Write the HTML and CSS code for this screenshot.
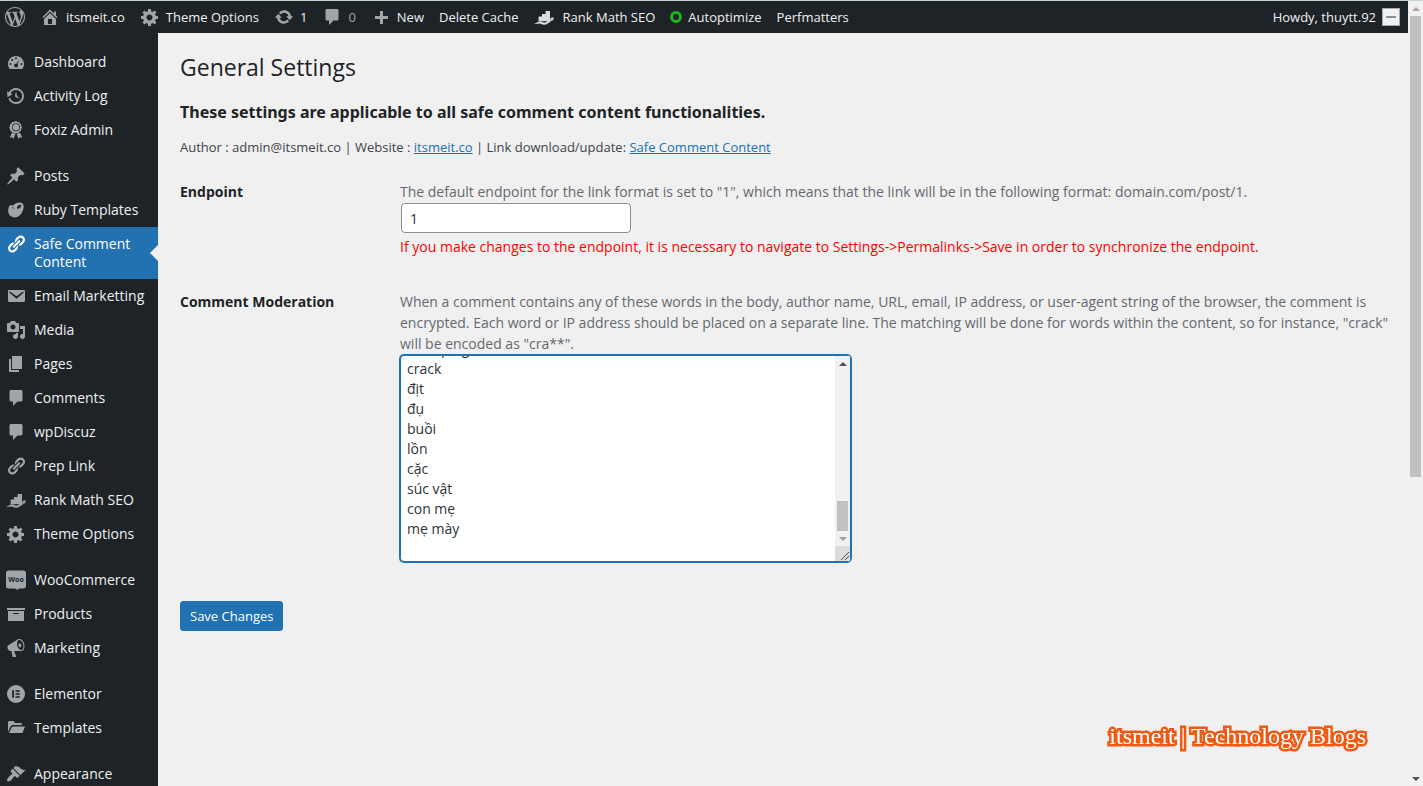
FILE: index.html
```html
<!DOCTYPE html>
<html lang="en">
<head>
<meta charset="utf-8">
<title>General Settings</title>
<link rel="stylesheet" href="styles.css">
</head>
<body>
<svg class="sprite" aria-hidden="true">
  <symbol id="i-wp" viewBox="0 0 20 20"><path d="M20 10c0-5.51-4.49-10-10-10C4.48 0 0 4.49 0 10c0 5.52 4.48 10 10 10 5.51 0 10-4.48 10-10zM7.78 15.37L4.37 6.22c.55-.02 1.17-.08 1.17-.08.5-.06.44-1.13-.06-1.11 0 0-1.45.11-2.37.11-.18 0-.37 0-.58-.01C4.12 2.69 6.87 1.11 10 1.11c2.33 0 4.45.87 6.05 2.34-.68-.11-1.65.39-1.65 1.58 0 .74.45 1.36.9 2.1.35.61.55 1.36.55 2.46 0 1.49-1.4 5-1.4 5l-3.03-8.37c.54-.02.82-.17.82-.17.5-.05.44-1.25-.06-1.22 0 0-1.44.12-2.38.12-.87 0-2.33-.12-2.33-.12-.5-.03-.56 1.2-.06 1.22l.92.08 1.26 3.41zM17.41 10c.24-.64.74-1.87.43-4.25.7 1.29 1.05 2.71 1.05 4.25 0 3.29-1.73 6.24-4.4 7.78.97-2.59 1.94-5.2 2.92-7.78zM6.1 18.09C3.12 16.65 1.11 13.53 1.11 10c0-1.3.23-2.48.72-3.59C3.25 10.3 4.67 14.2 6.1 18.09zm4.03-6.63l2.58 6.98c-.86.29-1.76.45-2.71.45-.79 0-1.57-.11-2.29-.33.81-2.38 1.62-4.74 2.42-7.1z"/></symbol>
  <symbol id="i-home" viewBox="0 0 20 20"><path d="M16 8.5l1.53 1.53-1.06 1.06L10 4.6l-6.47 6.49-1.06-1.06L10 2.5l4 4v-2h2v4zm-6-2.46l6 5.99V18H4v-5.97zM12 17v-5H8v5h4z"/></symbol>
  <symbol id="i-gear" viewBox="0 0 20 20"><path d="M18 12h-2.18c-.17.7-.44 1.35-.81 1.93l1.54 1.54-2.1 2.1-1.54-1.54c-.58.36-1.23.63-1.91.79V19H8v-2.18c-.68-.16-1.33-.43-1.91-.79l-1.54 1.54-2.12-2.12 1.54-1.54c-.36-.58-.63-1.23-.79-1.91H1V9.03h2.17c.16-.7.44-1.35.8-1.94L2.43 5.55l2.1-2.1 1.54 1.54c.58-.37 1.24-.64 1.93-.81V2h3v2.18c.68.16 1.33.43 1.91.79l1.54-1.54 2.12 2.12-1.54 1.54c.36.59.64 1.24.8 1.94H18V12zm-8.5 1.5c1.66 0 3-1.34 3-3s-1.34-3-3-3-3 1.34-3 3 1.34 3 3 3z"/></symbol>
  <symbol id="i-update" viewBox="0 0 20 20"><path d="M10.2 3.28c3.53 0 6.43 2.61 6.92 6h2.08l-3.5 4-3.5-4h2.32c-.45-1.97-2.21-3.45-4.32-3.45-1.45 0-2.73.71-3.54 1.78L4.95 5.66C6.23 4.2 8.11 3.28 10.2 3.28zm-.4 13.44c-3.52 0-6.43-2.61-6.92-6H.8l3.5-4c1.17 1.33 2.33 2.67 3.5 4H5.48c.45 1.97 2.21 3.45 4.32 3.45 1.45 0 2.73-.71 3.54-1.78l1.71 1.95c-1.28 1.46-3.15 2.38-5.25 2.38z"/></symbol>
  <symbol id="i-comment" viewBox="0 0 20 20"><path d="M5 2h10c.8 0 1.500.7 1.500 1.500v8.500c0 .8-.7 1.500-1.500 1.500h-3.500L7 18v-4.500H5c-.8 0-1.500-.7-1.500-1.500V3.500C3.500 2.700 4.200 2 5 2z"/></symbol>
  <symbol id="i-plus" viewBox="0 0 20 20"><path d="M17 9v3h-5v5H9v-5H4V9h5V4h3v5h5z"/></symbol>
  <symbol id="i-rank" viewBox="0 0 20 20"><path d="M4.600 9.500h3.400v4.300l-3.400.9zM8 7h3.600v7.200H8zM11.600 4H16v9l-2.200 2-2.200-.9z"/><path d="M.2 16.200c2.500-.1 4.500-2.300 7-1.700 1.600.4 2 1.400 3.500 1.100 2-.4 4-1.600 6.300-3.600l-.9-.9 3.700-.8-.8 3.500-.9-.8c-2.300 2.300-4.600 4.400-7.800 4.700-2.200.2-3-1.300-4.800-1.300-1.800.1-3.400.8-5.300-.2z"/></symbol>
  <symbol id="i-dash" viewBox="0 0 20 20"><path fill-rule="evenodd" d="M3.760 17h12.480c1.100-1.370 1.760-3.110 1.760-5 0-4.420-3.580-8-8-8s-8 3.580-8 8c0 1.890.66 3.630 1.760 5zM9 6.200a1 1 0 1 1 2 0 1 1 0 1 1-2 0zM5.200 8a1 1 0 1 1 2 0 1 1 0 1 1-2 0zM3.500 12a1 1 0 1 1 2 0 1 1 0 1 1-2 0zM14.500 12a1 1 0 1 1 2 0 1 1 0 1 1-2 0zM13.800 7l-2.300 5.100c.7.700.8 1.900.1 2.700-.8.900-2.200.9-3 0-.8-.9-.6-2.200.2-2.800.5-.3 1-.4 1.500-.3z"/></symbol>
  <symbol id="i-backup" viewBox="0 0 20 20"><path d="M13.650 2.880c3.930 2.010 5.480 6.840 3.470 10.770s-6.830 5.480-10.770 3.470c-1.870-.96-3.200-2.560-3.860-4.400l1.640-1.030c.45 1.570 1.520 2.950 3.080 3.760 3.010 1.540 6.690.35 8.230-2.660 1.550-3.010.36-6.690-2.650-8.240C9.780 3.010 6.100 4.200 4.560 7.210l1.880.97-4.950 3.080-.39-5.820 1.780.91C4.900 2.400 9.750.89 13.650 2.880zm-4.360 7.830C9.110 10.530 9 10.280 9 10c0-.07.03-.12.040-.19h-.01L10 5l.97 4.810L14 13l-4.500-2.120.020-.020c-.08-.04-.16-.09-.23-.15z"/></symbol>
  <symbol id="i-award" viewBox="0 0 20 20"><path fill-rule="evenodd" d="M10 1l1.500.9 1.700.1.700 1.500 1.400 1 0 1.700.8 1.500-.9 1.400-.1 1.700-1.600.7-1 1.400-1.700-.1-1.200.6-1.300-.6-1.700.1-1-1.400-1.400-.7-.2-1.700-.8-1.400.7-1.500.1-1.700 1.400-1 .7-1.500 1.700-.1zM10 3.300a4 4 0 1 0 0 8 4 4 0 0 0 0-8z"/><circle cx="10" cy="7.300" r="3.200"/><path d="M6 12.800l2 .6 1.500 0L7.500 19l-1.700-1.900L3.500 18zM14 12.800l-2 .6-1.500 0 2 5.600 1.700-1.900 2.300.9z"/></symbol>
  <symbol id="i-pin" viewBox="0 0 20 20"><path d="M10.440 3.020l1.820-1.820 6.360 6.350-1.830 1.820c-1.050-.68-2.480-.57-3.410.36l-.75.75c-.92.93-1.040 2.350-.35 3.410l-1.830 1.820-2.410-2.410-2.800 2.790c-.42.42-3.380 2.710-3.800 2.290s1.860-3.390 2.280-3.810l2.790-2.790L4.100 9.360l1.830-1.820c1.050.69 2.480.57 3.400-.36l.75-.75c.93-.92 1.050-2.350.36-3.410z"/></symbol>
  <symbol id="i-ruby" viewBox="0 0 20 20"><path fill-rule="evenodd" d="M3.200 6.200C4 4.900 5.600 4.700 6.700 5.800 8.300 3.600 11.300 2.300 14 2.600c3 .3 4.200 2.400 3.600 5.400-.9 5-4.300 9.400-8.900 9.400-3.800 0-6.700-2.700-6.500-6.800.1-1.800.3-3.300 1-4.400zM6.300 6.500c.9.500 1.500 1.300 1.300 2.400-.7-.3-1.200-1.100-1.300-2.400zM11 7.200c.7-1.500 2.300-2.600 4.200-2.300-.1 1.900-1.300 3.300-2.800 3.800-1.100.3-1.800-.5-1.400-1.500z"/></symbol>
  <symbol id="i-link" viewBox="0 0 20 20"><path d="M17.740 2.760c1.680 1.690 1.680 4.410 0 6.100l-1.530 1.520c-1.120 1.120-2.700 1.470-4.140 1.090l2.620-2.610.76-.77.76-.76c.84-.84.84-2.200 0-3.040-.84-.85-2.200-.85-3.040 0l-.77.76-3.380 3.380c-.37-1.440-.02-3.020 1.100-4.140l1.520-1.530c1.690-1.680 4.420-1.680 6.100 0zM8.590 13.430l5.340-5.340c.42-.42.42-1.100 0-1.520-.44-.43-1.130-.39-1.530 0l-5.330 5.340c-.42.42-.42 1.100 0 1.520.44.43 1.130.39 1.520 0zm-.76 2.290l4.140-4.150c.38 1.440.03 3.020-1.090 4.140l-1.520 1.530c-1.690 1.680-4.410 1.680-6.100 0-1.680-1.680-1.680-4.420 0-6.100l1.530-1.520c1.120-1.120 2.700-1.470 4.140-1.100l-4.140 4.150c-.85.84-.85 2.200 0 3.050.84.84 2.200.84 3.040 0z"/></symbol>
  <symbol id="i-mail" viewBox="0 0 20 20"><path fill-rule="evenodd" d="M3.200 4h14.600c.7 0 1.200.5 1.200 1.200v9.600c0 .7-.5 1.200-1.200 1.200H3.200C2.500 16 2 15.500 2 14.800V5.200C2 4.500 2.500 4 3.200 4zM4 5.400l-.8 1.200 7.300 6.200 7.300-6.200-.8-1.200-6.500 4.900z"/></symbol>
  <symbol id="i-media" viewBox="0 0 20 20"><path d="M13 11V4c0-.55-.45-1-1-1h-1.670L9 1H5L3.670 3H2c-.55 0-1 .45-1 1v7c0 .55.45 1 1 1h10c.55 0 1-.45 1-1zM7 4.500c1.380 0 2.500 1.120 2.500 2.500S8.380 9.500 7 9.500 4.500 8.380 4.500 7 5.620 4.500 7 4.500zM14 6h5v10.500c0 1.380-1.120 2.500-2.500 2.500S14 17.880 14 16.500s1.120-2.500 2.500-2.500c.17 0 .34.020.5.050V9h-3V6zm-4 8.050V13h2v3.500c0 1.380-1.120 2.500-2.500 2.500S7 17.880 7 16.500 8.120 14 9.500 14c.17 0 .34.020.5.050z"/></symbol>
  <symbol id="i-page" viewBox="0 0 20 20"><path d="M6 15V2h10v13H6zm-1 1h8v2H3V5h2v11z"/></symbol>
  <symbol id="i-woo" viewBox="0 0 20 20"><path d="M2.500 .5h15C18.900 .5 20 1.600 20 3v13c0 1.400-1.100 2.500-2.500 2.500H13l-1.300 1.500L9 18.500H2.500A2.500 2.500 0 0 1 0 16V3C0 1.600 1.100.5 2.500.5z"/><text class="woo-mark" x="10" y="12" text-anchor="middle">Woo</text></symbol>
  <symbol id="i-archive" viewBox="0 0 20 20"><path d="M19 4v2H1V4h18zM2 7h16v10H2V7zm11 3V9H7v1h6z"/></symbol>
  <symbol id="i-mega" viewBox="0 0 20 20"><path fill-rule="evenodd" d="M18.150 5.940c.46 1.620.38 3.220-.02 4.480-.42 1.280-1.260 2.180-2.300 2.480-.3.080-.6.100-1 .1h-6.800l2.220 5.500c.02.14-.06.26-.14.34-.08.1-.24.16-.34.16H6.950c-.1 0-.26-.06-.34-.16-.08-.08-.16-.2-.14-.34l-1-5.500H4.250c-.5.040-1.100-.2-1.560-.64s-.88-1.080-1.060-1.880c-.24-.8-.2-1.560-.02-2.200.18-.62.58-1.080 1.060-1.300l9.020-5.420c.3-.2.600-.36.980-.46 1.040-.3 2.240.1 3.220.98s1.840 2.240 2.260 3.860zM15.570 11.920c.4-.1.740-.34 1.020-.7.580-.7.860-1.760.86-3.040 0-.64-.1-1.300-.28-1.980-.34-1.360-1.020-2.500-1.780-3.240s-1.680-1.100-2.460-.88c-.82.22-1.400.96-1.700 2-.32 1.040-.28 2.360.06 3.720.38 1.360 1 2.500 1.800 3.240.78.74 1.620 1.100 2.480.88z"/><ellipse cx="13.900" cy="7.300" rx="1.300" ry="2.100" transform="rotate(-15 13.900 7.300)"/></symbol>
  <symbol id="i-elementor" viewBox="0 0 20 20"><path fill-rule="evenodd" d="M10 1a9 9 0 1 0 0 18 9 9 0 0 0 0-18zM6.200 6.200H8v7.600H6.200zM9.500 6.200h4.300v1.600H9.500zM9.500 9.200h4.300v1.600H9.500zM9.500 12.200h4.300v1.600H9.500z"/></symbol>
  <symbol id="i-folder" viewBox="0 0 20 20"><path d="M2 14V4.500C2 3.700 2.700 3 3.500 3h4L9 5h5.500c.8 0 1.500.7 1.500 1.500V7H7.500C6 7 5 7.600 4.400 8.800zM7.500 8.500H19L16.500 15H3l2.700-5.500c.3-.6 1-1 1.800-1z"/></symbol>
  <symbol id="i-brush" viewBox="0 0 20 20"><path d="M14.480 11.060L7.410 3.990l1.500-1.500c.5-.56 2.300-.47 3.510.32 1.210.8 1.430 1.280 2.910 2.100 1.180.64 2.450 1.260 4.450.85zm-.71.710L6.700 4.700 4.930 6.470c-.39.39-.39 1.020 0 1.410l1.060 1.060c.39.39.39 1.030 0 1.420-.6.6-1.430 1.110-2.210 1.690-.35.26-.7.53-1.010.84C1.430 14.230.4 16.080 1.400 17.070c.99 1 2.840-.03 4.180-1.360.31-.31.58-.66.85-1.020.57-.78 1.080-1.610 1.690-2.210.39-.39 1.020-.39 1.410 0l1.060 1.060c.39.39 1.020.39 1.410 0z"/></symbol>
</svg>

<div class="window">
  <div class="screen">
    <header class="adminbar">
      <nav class="bar-links" aria-label="Toolbar">
        <a href="#" aria-label="About WordPress"><svg class="icon"><use href="#i-wp"/></svg></a>
        <a href="#"><svg class="icon"><use href="#i-home"/></svg>itsmeit.co</a>
        <a href="#"><svg class="icon"><use href="#i-gear"/></svg>Theme Options</a>
        <a href="#"><svg class="icon"><use href="#i-update"/></svg>1</a>
        <a href="#"><svg class="icon"><use href="#i-comment"/></svg><span class="muted">0</span></a>
        <a href="#"><svg class="icon"><use href="#i-plus"/></svg>New</a>
        <a href="#">Delete Cache</a>
        <a class="wide-gap" href="#"><svg class="icon light"><use href="#i-rank"/></svg>Rank Math SEO</a>
        <a href="#"><span class="ring"></span>Autoptimize</a>
        <a href="#">Perfmatters</a>
      </nav>
      <a class="account" href="#">Howdy, thuytt.92<span class="avatar"><span class="avatar-mark"></span></span></a>
    </header>

    <div class="body">
      <nav class="menu" aria-label="Main menu">
        <a href="#"><svg class="icon"><use href="#i-dash"/></svg>Dashboard</a>
        <a href="#"><svg class="icon"><use href="#i-backup"/></svg>Activity Log</a>
        <a href="#"><svg class="icon"><use href="#i-award"/></svg>Foxiz Admin</a>
        <a class="group" href="#"><svg class="icon"><use href="#i-pin"/></svg>Posts</a>
        <a href="#"><svg class="icon"><use href="#i-ruby"/></svg>Ruby Templates</a>
        <a class="current" href="#" aria-current="page"><svg class="icon"><use href="#i-link"/></svg>Safe Comment Content</a>
        <a href="#"><svg class="icon"><use href="#i-mail"/></svg>Email Marketting</a>
        <a href="#"><svg class="icon"><use href="#i-media"/></svg>Media</a>
        <a href="#"><svg class="icon"><use href="#i-page"/></svg>Pages</a>
        <a href="#"><svg class="icon"><use href="#i-comment"/></svg>Comments</a>
        <a href="#"><svg class="icon"><use href="#i-comment"/></svg>wpDiscuz</a>
        <a href="#"><svg class="icon"><use href="#i-link"/></svg>Prep Link</a>
        <a href="#"><svg class="icon"><use href="#i-rank"/></svg>Rank Math SEO</a>
        <a href="#"><svg class="icon"><use href="#i-gear"/></svg>Theme Options</a>
        <a class="group" href="#"><svg class="icon"><use href="#i-woo"/></svg>WooCommerce</a>
        <a href="#"><svg class="icon"><use href="#i-archive"/></svg>Products</a>
        <a href="#"><svg class="icon"><use href="#i-mega"/></svg>Marketing</a>
        <a class="group" href="#"><svg class="icon"><use href="#i-elementor"/></svg>Elementor</a>
        <a href="#"><svg class="icon"><use href="#i-folder"/></svg>Templates</a>
        <a class="group" href="#"><svg class="icon"><use href="#i-brush"/></svg>Appearance</a>
      </nav>

      <main class="content">
        <h1>General Settings</h1>
        <h2>These settings are applicable to all safe comment content functionalities.</h2>
        <p class="meta">Author : admin@itsmeit.co | Website : <a href="#">itsmeit.co</a> | Link download/update: <a href="#">Safe Comment Content</a></p>
        <form class="settings">
          <div class="row">
            <label for="endpoint">Endpoint</label>
            <div class="field">
              <p class="description">The default endpoint for the link format is set to "1", which means that the link will be in the following format: domain.com/post/1.</p>
              <input class="text" id="endpoint" type="text" value="1">
              <p class="warning">If you make changes to the endpoint, it is necessary to navigate to Settings-&gt;Permalinks-&gt;Save in order to synchronize the endpoint.</p>
            </div>
          </div>
          <div class="row">
            <label for="words">Comment Moderation</label>
            <div class="field">
              <p class="description">When a comment contains any of these words in the body, author name, URL, email, IP address, or user-agent string of the browser, the comment is encrypted. Each word or IP address should be placed on a separate line. The matching will be done for words within the content, so for instance, "crack" will be encoded as "cra**".</p>
              <div class="words-box">
                <textarea id="words" rows="10">hack ping
crack
địt
đụ
buồi
lồn
cặc
súc vật
con mẹ
mẹ mày
</textarea>
                <div class="words-scroll" aria-hidden="true">
                  <span class="arrow up"></span>
                  <span class="words-thumb"></span>
                  <span class="arrow down faded"></span>
                  <svg class="grip" viewBox="0 0 15 15"><path d="M6 14l8-8M10 14l4-4"/></svg>
                </div>
              </div>
            </div>
          </div>
          <button class="save" type="submit">Save Changes</button>
        </form>
      </main>
    </div>
  </div>
  <div class="page-scroll" aria-hidden="true">
    <span class="arrow up faded"></span>
    <span class="page-track"><span class="page-thumb"></span></span>
    <span class="arrow down"></span>
  </div>
</div>
<div class="watermark">itsmeit | Technology Blogs</div>
<script src="script.js"></script>
</body>
</html>
```
FILE: styles.css
```css
* { box-sizing: border-box; }

body {
  margin: 0;
  background: #f0f0f0;
  color: #3c434a;
  font: 13px/20px "Open Sans", "Noto Sans", sans-serif;
}

h1, h2, p { margin: 0; }
a { color: #2271b1; }
.sprite { display: none; }

.icon {
  width: 20px;
  height: 20px;
  flex: none;
  fill: #a0a5aa;
}
.icon.light { fill: #dcdcde; }
.woo-mark { font: bold 7px "Open Sans", sans-serif; fill: #1d2327; }

.window {
  display: flex;
  height: 100vh;
  overflow: hidden;
  border-top: 1px solid #c3d3d8;
}
.screen { flex: 1; display: flex; flex-direction: column; min-width: 0; }

/* Toolbar */
.adminbar {
  display: flex;
  justify-content: space-between;
  flex: none;
  height: 32px;
  padding: 0 8px 0 5px;
  background: #1d2327;
}
.bar-links { display: flex; gap: 15px; }
.adminbar a {
  display: flex;
  align-items: center;
  gap: 6px;
  color: #f0f0f1;
  text-decoration: none;
  white-space: nowrap;
}
.adminbar .wide-gap { gap: 9px; }
.muted { color: #a0a5aa; }
.ring {
  width: 12px;
  height: 12px;
  border: 3px solid #1fb41f;
  border-radius: 50%;
}
.avatar {
  display: grid;
  place-items: center;
  width: 18px;
  height: 18px;
  border: 1px solid #a7aaad;
  background: #f0f0f1;
}
.avatar-mark { width: 10px; height: 2px; background: #8c8f94; }

/* Sidebar */
.body { display: flex; flex: 1; min-height: 0; }
.menu {
  flex: none;
  width: 158px;
  padding-top: 12px;
  overflow: hidden;
  background: #1d2327;
}
.menu a {
  display: flex;
  gap: 8px;
  padding: 8px 6px;
  color: #f0f0f1;
  font-size: 14px;
  line-height: 18px;
  text-decoration: none;
}
.menu .icon { margin: -1px 0; }
.menu .group { margin-top: 12px; }
.menu .current { position: relative; background: #2271b1; color: #fff; }
.menu .current .icon { fill: #fff; }
.menu .current::after {
  content: "";
  position: absolute;
  right: 0;
  top: 50%;
  margin-top: -8px;
  border: 8px solid transparent;
  border-right-color: #f0f0f0;
  border-left: 0;
}

/* Content */
.content { flex: 1; min-width: 0; padding: 19px 10px 0 22px; }
h1 { color: #1d2327; font-size: 23px; font-weight: 400; line-height: 30px; }
h2 { margin-top: 20px; color: #1d2327; font-family: "Noto Sans", sans-serif; font-size: 16px; line-height: 20px; }
.meta { margin-top: 15px; }
.row { display: grid; grid-template-columns: 220px 1fr; padding-top: 24px; }
.row + .row { padding-top: 34px; }
.row label { color: #1d2327; font-size: 14px; font-weight: 700; line-height: 21px; }
.description, .warning { font-size: 14px; line-height: 21px; }
.description { color: #646970; }
.warning { margin-top: 3px; color: #f00; }
.text {
  display: block;
  width: 230px;
  height: 30px;
  margin: 1px 1px 0;
  padding: 0 8px;
  border: 1px solid #8c8f94;
  border-radius: 4px;
  background: #fff;
  color: #2c3338;
  font: inherit;
  font-size: 14px;
}
.words-box { position: relative; width: 451px; margin-top: 1px; }
.words-box textarea {
  display: block;
  width: 100%;
  height: 207px;
  padding: 2px 22px 2px 6px;
  border: 1px solid #2271b1;
  border-radius: 4px;
  box-shadow: 0 0 0 1px #2271b1;
  background: #fff;
  color: #2c3338;
  font: inherit;
  font-size: 14px;
  line-height: 20px;
  overflow: hidden;
  resize: none;
  outline: 0;
}
.words-scroll {
  position: absolute;
  top: 1px;
  right: 1px;
  bottom: 1px;
  display: flex;
  flex-direction: column;
  align-items: center;
  width: 15px;
  background: #f1f1f1;
}
.words-thumb { width: 11px; height: 30px; margin-top: auto; background: #c1c1c1; }
.grip { width: 15px; height: 15px; background: #dcdcdc; stroke: #505050; fill: none; }

.arrow { flex: none; display: grid; place-items: center; width: 15px; height: 15px; }
.arrow::before { content: ""; border: 4px solid transparent; }
.arrow.up::before { border-top: 0; border-bottom-color: #505050; }
.arrow.down::before { border-bottom: 0; border-top-color: #505050; }
.arrow.up.faded::before { border-bottom-color: #a3a3a3; }
.arrow.down.faded::before { border-top-color: #a3a3a3; }

.save {
  margin-top: 39px;
  height: 30px;
  padding: 0 9px;
  border: 1px solid #2271b1;
  border-radius: 3px;
  background: #2271b1;
  color: #fff;
  font: inherit;
}

.page-scroll {
  display: flex;
  flex-direction: column;
  align-items: center;
  width: 15px;
  background: #f1f1f1;
}
.page-track { flex: 1; }
.page-thumb { display: block; width: 11px; height: 61%; background: #c1c1c1; }

.watermark {
  position: fixed;
  right: 57px;
  bottom: 36px;
  color: #fff;
  font: 24px/28px "Liberation Serif", serif;
  -webkit-text-stroke: 5px #ee5a14;
  paint-order: stroke fill;
  text-shadow: 0 0 3px #ee5a14;
}
```
FILE: script.js
```js
const words = document.getElementById("words");
words.scrollTop = words.scrollHeight;
```
